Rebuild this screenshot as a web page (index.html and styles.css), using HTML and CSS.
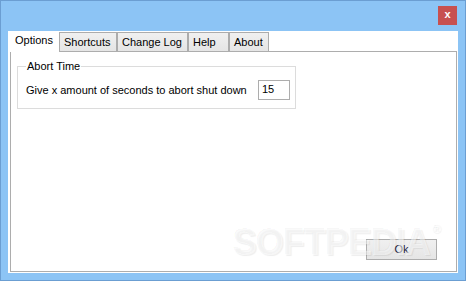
FILE: index.html
```html
<!DOCTYPE html>
<html>
<head>
<meta charset="utf-8">
<link rel="stylesheet" href="styles.css">
</head>
<body>
<div class="window">
  <div class="titlebar">
    <div class="close">x</div>
  </div>
  <div class="client">
    <div class="tabs">
      <div class="tab selected w-options">Options</div>
      <div class="tab w-shortcuts">Shortcuts</div>
      <div class="tab w-changelog">Change Log</div>
      <div class="tab w-help">Help</div>
      <div class="tab w-about">About</div>
    </div>
    <div class="panel">
      <fieldset class="group">
        <legend class="legend">Abort Time</legend>
        <div class="row">
          <span class="label">Give x amount of seconds to abort shut down</span>
          <div class="edit">15</div>
        </div>
      </fieldset>
      <div class="footer">
        <div class="button">Ok</div>
      </div>
      <div class="watermark">SOFTPEDIA<span class="reg">®</span></div>
    </div>
  </div>
</div>
</body>
</html>
```

FILE: styles.css
```css
html, body {
  margin: 0;
  padding: 0;
  background: #8cc4f5;
}
body {
  font-family: "Liberation Sans", Arial, sans-serif;
  font-size: 11px;
  color: #000;
}
.window {
  width: 466px;
  height: 281px;
  box-sizing: border-box;
  border: 1px solid #6b9ed2;
  background: #8cc4f5;
  display: flex;
  flex-direction: column;
}
.titlebar {
  height: 30px;
  flex: none;
  display: flex;
  justify-content: flex-end;
  align-items: flex-start;
  padding: 5px 8px 0 0;
  box-sizing: border-box;
}
.close {
  width: 19px;
  height: 19px;
  background: #c75050;
  color: #fff;
  font-weight: bold;
  font-size: 11px;
  line-height: 17px;
  text-align: center;
}
.client {
  flex: 1;
  margin: 0 7px 7px 7px;
  background: #fff;
  padding: 0 1px 1px 2px;
  display: flex;
  flex-direction: column;
  min-height: 0;
}
.tabs {
  height: 20px;
  flex: none;
  display: flex;
  align-items: flex-end;
  position: relative;
  z-index: 1;
}
.tab {
  box-sizing: border-box;
  height: 19px;
  border: 1px solid #acacac;
  border-bottom: none;
  background: linear-gradient(#f0f0f0, #e5e5e5);
  line-height: 16px;
  padding: 1px 0 0 4px;
  white-space: nowrap;
}
.tab.selected {
  height: 21px;
  margin-bottom: -1px;
  background: #fff;
  border-color: #fff;
  padding: 0 0 0 4px;
  line-height: 17px;
}
.w-options { width: 49px; }
.w-shortcuts { width: 58px; }
.w-changelog { width: 71px; }
.w-help { width: 41px; }
.w-about { width: 40px; }
.panel {
  flex: 1;
  border: 1px solid #adadad;
  display: flex;
  flex-direction: column;
  position: relative;
  min-height: 0;
}
.group {
  margin: 8px 0 0 6px;
  padding: 0 0 8px 8px;
  width: 279px;
  box-sizing: border-box;
  border: 1px solid #dcdcdc;
  min-inline-size: 0;
}
.legend {
  padding: 0 1px;
  margin-left: 0;
  line-height: 13px;
}
.row {
  display: flex;
  align-items: center;
  margin-top: 7px;
}
.label {
  width: 232px;
}
.edit {
  box-sizing: border-box;
  width: 32px;
  height: 20px;
  border: 1px solid #adadad;
  line-height: 17px;
  padding-left: 3px;
}
.footer {
  margin-top: auto;
  display: flex;
  justify-content: flex-end;
  padding: 0 19px 11px 0;
}
.button {
  box-sizing: border-box;
  width: 71px;
  height: 21px;
  border: 1px solid #adadad;
  background: linear-gradient(#f0f0f0, #e5e5e5);
  text-align: center;
  line-height: 19px;
  color: #1a1a40;
}
.watermark {
  position: absolute;
  left: 222px;
  top: 170px;
  font-family: "Liberation Sans", Arial, sans-serif;
  font-weight: bold;
  font-size: 36px;
  letter-spacing: -1px;
  color: rgba(255, 255, 255, 0.55);
  text-shadow: 1px 1px 1px rgba(0, 0, 0, 0.07), -1px -1px 0 rgba(0, 0, 0, 0.03);
  pointer-events: none;
  white-space: nowrap;
}
.reg {
  font-size: 12px;
  vertical-align: top;
  margin-left: 2px;
}
```
